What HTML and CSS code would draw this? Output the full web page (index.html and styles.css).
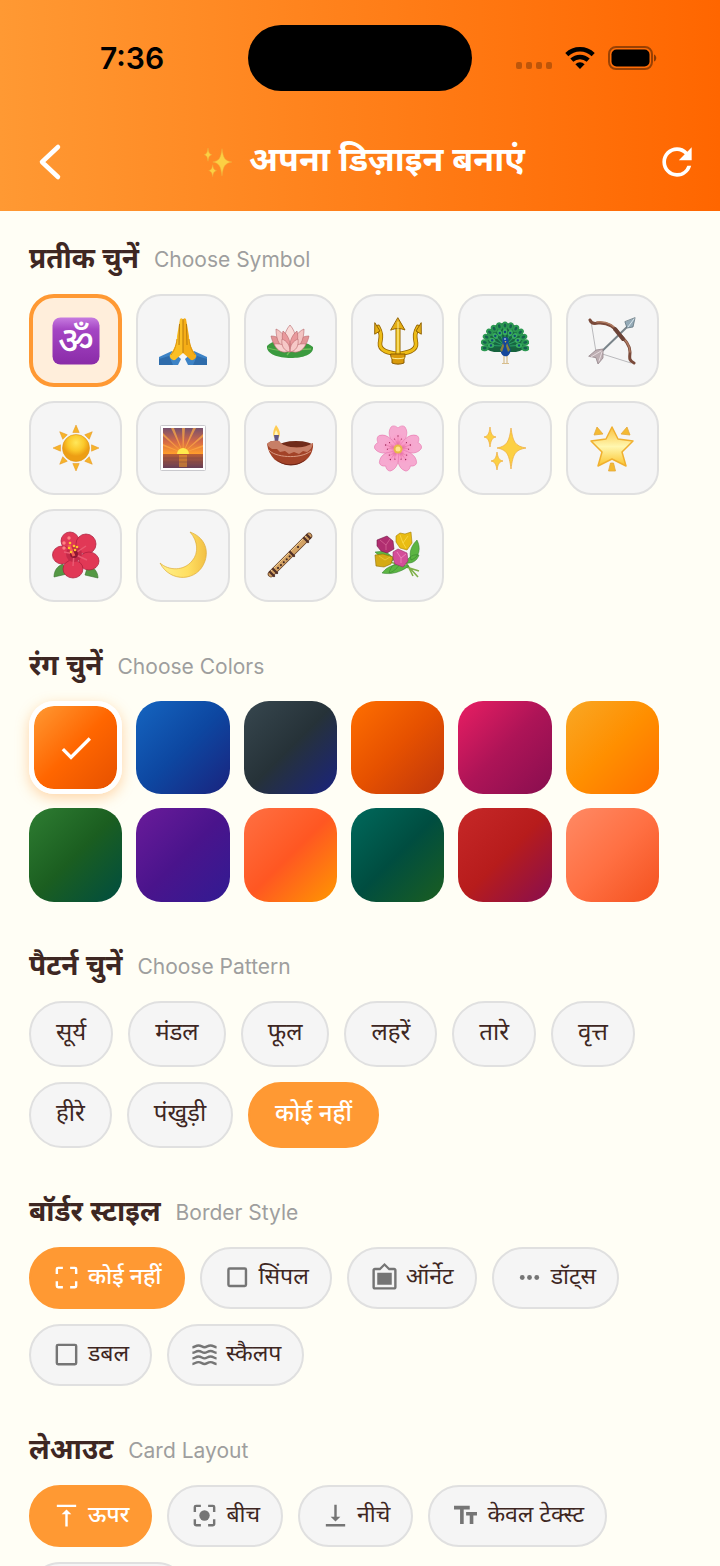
FILE: index.html
```html
<!DOCTYPE html>
<html lang="hi">
<head>
    <meta charset="UTF-8">
    <meta name="viewport" content="width=device-width, initial-scale=1.0">
    <title>अपना डिज़ाइन बनाएं</title>
    <link rel="stylesheet" href="styles.css">
</head>
<body>
    <header class="header">
        <div class="status-bar">
            <span class="time">7:36</span>
            <span class="island"></span>
            <span class="status-icons">
                <svg width="36" height="30" viewBox="0 0 36 30" fill="#000" opacity="0.25">
                    <rect x="0" y="19" width="6" height="7" rx="2"/><rect x="10" y="19" width="6" height="7" rx="2"/><rect x="20" y="19" width="6" height="7" rx="2"/><rect x="30" y="19" width="6" height="7" rx="2"/>
                </svg>
                <svg width="30" height="24" viewBox="0 0 30 24" fill="none" stroke="#000" stroke-width="4.4">
                    <path d="M1.8 8.6a19 19 0 0 1 26.4 0"/><path d="M6.8 14.2a12 12 0 0 1 16.4 0"/><path d="M15 23l-4.6-4.8a6.6 6.6 0 0 1 9.2 0z" fill="#000" stroke="none"/>
                </svg>
                <svg width="49" height="24" viewBox="0 0 49 24">
                    <rect x="1" y="1" width="43" height="22" rx="7" fill="none" stroke="#000" stroke-opacity="0.4" stroke-width="2"/><rect x="3.5" y="3.5" width="38" height="17" rx="5"/><path d="M46 8.5c3 1 3 6 0 7z" opacity="0.45"/>
                </svg>
            </span>
        </div>
        <div class="app-bar">
            <button class="icon-btn" aria-label="वापस">
                <svg width="44" height="44" viewBox="0 0 44 44" fill="none" stroke="#fff" stroke-width="4.5" stroke-linecap="round" stroke-linejoin="round"><path d="M30 7L14 22l16 15"/></svg>
            </button>
            <h1>
                <svg width="32" height="32" viewBox="0 0 48 48"><use href="#sparkles"/></svg>
                <span>अपना डिज़ाइन बनाएं</span>
            </h1>
            <button class="icon-btn" aria-label="रीसेट">
                <svg width="44" height="44" viewBox="0 0 24 24" fill="#fff"><path d="M17.65 6.35A7.96 7.96 0 0 0 12 4c-4.42 0-7.99 3.58-7.99 8s3.57 8 7.99 8c3.73 0 6.84-2.55 7.73-6h-2.08A5.99 5.99 0 0 1 12 18c-3.31 0-6-2.69-6-6s2.69-6 6-6c1.66 0 3.14.69 4.22 1.78L13 11h7V4l-2.35 2.35z"/></svg>
            </button>
        </div>
    </header>

    <main class="content">
        <section>
            <h2>प्रतीक चुनें <small>Choose Symbol</small></h2>
            <div class="tiles">
                <button class="tile active" aria-label="ओम">
                    <svg viewBox="0 0 48 48">
                        <defs><linearGradient id="om" x2="0" y2="1"><stop offset="0" stop-color="#c77be0"/><stop offset=".25" stop-color="#a546c4"/><stop offset="1" stop-color="#8a2ba8"/></linearGradient></defs>
                        <rect x=".5" y=".5" width="47" height="47" rx="8" fill="url(#om)"/>
                        <text class="om-text" x="24" y="37" text-anchor="middle">ॐ</text>
                    </svg>
                </button>
                <button class="tile" aria-label="प्रणाम">
                    <svg viewBox="0 0 48 48">
                        <path d="M0 40l13-6 9 8-3 6H0z" fill="#3d83c6"/><path d="M48 40l-13-6-9 8 3 6h19z" fill="#3d83c6"/>
                        <path d="M0 42l10-3 4 9H0zM48 42l-10-3-4 9h14z" fill="#2e6cab"/>
                        <path d="M21 2c2-2 3 0 3 2v32l-8 7c-3 1-6-3-5-5 5-7 7-13 7-19z" fill="#fbbf24"/>
                        <path d="M27 2c-2-2-3 0-3 2v32l8 7c3 1 6-3 5-5-5-7-7-13-7-19z" fill="#f5ad16"/>
                        <path d="M24 2v34M20.5 7L20 28M27.5 7L28 28" stroke="#b97a0c" fill="none"/>
                        <path d="M18 22c-1 8-3 12-6 16M30 22c1 8 3 12 6 16" stroke="#dc9411" fill="none"/>
                    </svg>
                </button>
                <button class="tile" aria-label="कमल">
                    <svg viewBox="0 0 48 48">
                        <path d="M1 29c5-6 14-6 20-2 7-2 20-3 26 3 1 8-11 11-22 11C12 41 0 37 1 29z" fill="#3b9a3f"/>
                        <path d="M2 31c7 2 14 4 22 2l21-1M21 38l4-5" stroke="#72be5b" stroke-width="1.3" fill="none"/>
                        <g stroke="#b9676b" stroke-width=".6">
                            <path d="M5 19c8 0 14 5 18 14-10 2-16-4-18-14zM43 19c-8 0-14 5-18 14 10 2 16-4 18-14z" fill="#e29596"/>
                            <path d="M10 12c7 3 12 11 14 22-10-2-14-11-14-22zM38 12c-7 3-12 11-14 22 10-2 14-11 14-22z" fill="#f3c4c2"/>
                            <path d="M24 8c7 8 7 17 0 26-7-9-7-18 0-26z" fill="#f9dcd9"/>
                            <path d="M17 14c6 5 8 12 7 20-7-4-9-12-7-20zM31 14c-6 5-8 12-7 20 7-4 9-12 7-20z" fill="#e9999c"/>
                            <path d="M8 27c8-1 13 2 16 7-7 3-13 0-16-7zM40 27c-8-1-13 2-16 7 7 3 13 0 16-7z" fill="#f8cfcd"/>
                            <path d="M16 22c5 2 8 6 8 13-6-1-9-6-8-13zM32 22c-5 2-8 6-8 13 6-1 9-6 8-13z" fill="#f6c8c7"/>
                        </g>
                    </svg>
                </button>
                <button class="tile" aria-label="त्रिशूल">
                    <svg viewBox="0 0 48 48" fill="none" stroke-linecap="round" stroke-linejoin="round">
                        <path d="M4 10c4 7 3 10 2 16-1 8 9 10 18 11 9-1 19-3 18-11-1-6-2-9 2-16" stroke="#946400" stroke-width="4.6"/>
                        <path d="M4 10c4 7 3 10 2 16-1 8 9 10 18 11 9-1 19-3 18-11-1-6-2-9 2-16" stroke="#eebd17" stroke-width="3"/>
                        <path d="M24 8v31" stroke="#946400" stroke-width="5"/><path d="M24 8v31" stroke="#f0c31c" stroke-width="3.4"/>
                        <path d="M24 1l7 12c-5-2-9-2-14 0zM1 6l5 8-5 3zM47 6l-5 8 5 3z" fill="#e6b014" stroke="#946400"/>
                        <path d="M17 37h14v3l-1 2v4c-4 1.500-8 1.500-12 0v-4l-1-2z" fill="#d99a0b" stroke="#8a5b00"/><path d="M18 41c4 1 8 1 12 0M24 5v30" stroke="#fff09a"/>
                    </svg>
                </button>
                <button class="tile" aria-label="मोर">
                    <svg viewBox="0 0 48 48">
                        <defs>
                            <g id="feather"><path d="M24 32V8" stroke="#176d49"/><ellipse cx="24" cy="7.5" rx="3" ry="4" fill="#2c9952"/><ellipse cx="24" cy="7.5" rx="1.3" ry="2" fill="#15604f"/></g>
                            <g id="feather-in"><path d="M24 30V15" stroke="#2b9a63"/><ellipse cx="24" cy="14" rx="2.4" ry="3.2" fill="#38ad5f"/><circle cx="24" cy="14" r="1.2" fill="#12477c"/></g>
                        </defs>
                        <path d="M24 6C12 6 4 15 4 27c0 6 6 8 11 8h18c5 0 11-2 11-8C44 15 36 6 24 6z" fill="#17633e"/>
                        <g transform="translate(0 1)">
                            <use href="#feather" transform="rotate(-96 24 28)"/><use href="#feather" transform="rotate(-80 24 28)"/><use href="#feather" transform="rotate(-64 24 28)"/><use href="#feather" transform="rotate(-48 24 28)"/><use href="#feather" transform="rotate(-32 24 28)"/><use href="#feather" transform="rotate(-16 24 28)"/><use href="#feather"/><use href="#feather" transform="rotate(16 24 28)"/><use href="#feather" transform="rotate(32 24 28)"/><use href="#feather" transform="rotate(48 24 28)"/><use href="#feather" transform="rotate(64 24 28)"/><use href="#feather" transform="rotate(80 24 28)"/><use href="#feather" transform="rotate(96 24 28)"/>
                            <use href="#feather-in" transform="rotate(-88 24 28)"/><use href="#feather-in" transform="rotate(-66 24 28)"/><use href="#feather-in" transform="rotate(-44 24 28)"/><use href="#feather-in" transform="rotate(-22 24 28)"/><use href="#feather-in"/><use href="#feather-in" transform="rotate(22 24 28)"/><use href="#feather-in" transform="rotate(44 24 28)"/><use href="#feather-in" transform="rotate(66 24 28)"/><use href="#feather-in" transform="rotate(88 24 28)"/>
                        </g>
                        <path d="M23 38v8M26 38v8M21 46.500h7" stroke="#d7bd8c" stroke-width="1.2"/>
                        <path d="M24 20c3 0 4 2 3.500 5 0 3 2.500 5 2 9-1 7-9 7-10 0-.5-4 2-6 2-9-.5-3 0-5 2.500-5z" fill="#15479b"/><path d="M22 26l-3 7 2 2 2-6zM26 26l3 7-2 2-2-6z" fill="#89843a"/><circle cx="24" cy="22" r=".8" fill="#fff"/><path d="M23.500 24h2l-1 2z" fill="#c8b04f"/>
                    </svg>
                </button>
                <button class="tile" aria-label="धनुष बाण">
                    <svg viewBox="0 0 48 48" fill="none" stroke-linecap="round">
                        <path d="M3 4l5 31 35 11" stroke="#a9a9ad" stroke-width=".8"/>
                        <path d="M9 39L40 9" stroke="#7a848a" stroke-width="2"/>
                        <path d="M47 1l-2 9-6 1-2-6z" fill="#94aab7" stroke="#61737d" stroke-width=".8"/><path d="M46 2l-6 8" stroke="#dbe7ee"/>
                        <path d="M1 39l7-6 7-1v9l-5 6-2-6z" fill="#bdaeb2" stroke="#94878b" stroke-width=".8"/><path d="M3 40l10-6M11 44l3-9" stroke="#e5dadd"/>
                        <path d="M2 3c1 3 4 4 8 3 10-1 18 5 22 12 5 5 10 10 10 17 0 5-2 8 4 11" stroke="#7a4a3a" stroke-width="3"/>
                        <path d="M9 5c10-1 17 3 22 11 5 6 11 11 11 19" stroke="#af7b61" stroke-width="1.5"/>
                        <path d="M27 12l8 10" stroke="#6b4337" stroke-width="4"/>
                    </svg>
                </button>
                <button class="tile" aria-label="सूर्य">
                    <svg viewBox="0 0 48 48">
                        <defs>
                            <radialGradient id="gold" cy=".3"><stop offset="0" stop-color="#ffe75a"/><stop offset=".6" stop-color="#fbc82a"/><stop offset="1" stop-color="#ed9e14"/></radialGradient>
                            <path id="ray" d="M24 1l3.200 7.500h-6.400z" fill="#f6b32a" stroke="#e6951a" stroke-width=".5"/>
                        </defs>
                        <use href="#ray"/><use href="#ray" transform="rotate(45 24 24)"/><use href="#ray" transform="rotate(90 24 24)"/><use href="#ray" transform="rotate(135 24 24)"/><use href="#ray" transform="rotate(180 24 24)"/><use href="#ray" transform="rotate(225 24 24)"/><use href="#ray" transform="rotate(270 24 24)"/><use href="#ray" transform="rotate(315 24 24)"/>
                        <circle cx="24" cy="24" r="13.5" fill="url(#gold)" stroke="#dd9417" stroke-width=".6"/>
                    </svg>
                </button>
                <button class="tile" aria-label="सूर्योदय">
                    <svg viewBox="0 0 48 48">
                        <defs><linearGradient id="sky" x2="0" y2="1"><stop offset="0" stop-color="#76506d"/><stop offset=".35" stop-color="#d66a45"/><stop offset=".64" stop-color="#ff9d2c"/><stop offset=".66" stop-color="#b75d35"/><stop offset="1" stop-color="#663e56"/></linearGradient></defs>
                        <rect x="1.5" y="1.5" width="45" height="45" rx="1" fill="#fff" stroke="#c9c9cd"/>
                        <rect x="4" y="4" width="40" height="40" fill="url(#sky)"/>
                        <path d="M24 29L4 9v3zM24 29L12 4h3zM24 29L23 4h3zM24 29L34 4h3zM24 29L44 10v3zM24 29L4 20v2zM24 29l20-8v2z" fill="#ffad45" opacity=".7"/>
                        <path d="M18 30a6 6 0 0 1 12 0z" fill="#ffe94c"/><path d="M20 31h8v12h-8z" fill="#f39a28" opacity=".55"/><path d="M4 34h40M4 38h40" stroke="#7d4744" opacity=".5"/>
                    </svg>
                </button>
                <button class="tile" aria-label="दीया">
                    <svg viewBox="0 0 48 48">
                        <path d="M10 1c5 6 5 12 1 14-5-1-5-7-1-14z" fill="#ffcc52"/><path d="M10 6c3 4 2 7 0 8-2-1-2-4 0-8z" fill="#fff5bd"/><path d="M8 11h5l-1 7H9z" fill="#605788"/>
                        <ellipse cx="30" cy="22" rx="17" ry="5" fill="#702b1a"/>
                        <path d="M1 20c2-3 7-4 12-3 3 6 22 10 34 2 1 12-8 22-22 22C11 41 3 33 1 20z" fill="#a34328"/>
                        <path d="M1 20c2-3 7-4 12-3 3 6 22 10 34 2-1 5-3 7-6 9l-4-1-4 3-5-2-5 2-4-3-5 1-3-3-5 0c-2-1-4-3-5-5z" fill="#c77f67"/>
                        <path d="M3 26c5 7 30 10 42 1" stroke="#d99981" fill="none"/><path d="M10 35c7 7 22 7 30 0-6 8-23 9-30 0z" fill="#6c2417"/>
                    </svg>
                </button>
                <button class="tile" aria-label="पुष्प">
                    <svg viewBox="0 0 48 48">
                        <defs>
                            <radialGradient id="pink" cy=".8"><stop offset="0" stop-color="#ee6da9"/><stop offset=".4" stop-color="#fb9bc8"/><stop offset="1" stop-color="#f6a9d0"/></radialGradient>
                            <g id="petal"><path d="M24 25c-6-6-12-15-7-22 2-2 5-1 7 1 2-2 5-3 7-1 5 7-1 16-7 22z" fill="url(#pink)" stroke="#e777ae" stroke-width=".6"/><path d="M24 21v-8M24 21l-3-6M24 21l3-6" stroke="#e07aa6" stroke-width=".5"/><circle cx="24" cy="12" r=".7" fill="#9c2758"/><circle cx="20.5" cy="15" r=".6" fill="#9c2758"/><circle cx="27.5" cy="15" r=".6" fill="#9c2758"/></g>
                        </defs>
                        <use href="#petal"/><use href="#petal" transform="rotate(72 24 25)"/><use href="#petal" transform="rotate(144 24 25)"/><use href="#petal" transform="rotate(216 24 25)"/><use href="#petal" transform="rotate(288 24 25)"/>
                        <circle cx="24" cy="25" r="4.5" fill="#e8b848"/><circle cx="24" cy="25" r="2.5" fill="#ffe58b"/>
                    </svg>
                </button>
                <button class="tile" aria-label="चमक">
                    <svg viewBox="0 0 48 48">
                        <defs><g id="sparkles" fill="#fcd043" stroke="#eeaa3c" stroke-width=".7"><path d="M30 4c2 14 4 18 15 20-11 2-13 6-15 21-2-15-4-19-14-21 10-2 12-6 14-20z"/><path d="M9 3c1 7 2 9 6 10-4 1-5 3-6 10-1-7-2-9-6-10 4-1 5-3 6-10z"/><path d="M16 28c1 6 2 8 6 9-4 1-5 3-6 9-1-6-2-8-6-9 4-1 5-3 6-9z"/></g></defs>
                        <use href="#sparkles"/>
                    </svg>
                </button>
                <button class="tile" aria-label="तारा">
                    <svg viewBox="0 0 48 48">
                        <defs><linearGradient id="star" x2="0" y2="1"><stop offset="0" stop-color="#fbc13c"/><stop offset=".5" stop-color="#fff7b0"/><stop offset="1" stop-color="#fbc42c"/></linearGradient></defs>
                        <path d="M24 3l6 12 15 2-11 11 4 14-14-7-14 7 4-14L3 17l15-2z" fill="url(#star)" stroke="#f0b030" stroke-width="1.5" stroke-linejoin="round"/>
                        <path d="M9 3l6 7-9 1zM39 3l-6 7 9 1zM22.500 39h3l2 8h-7z" fill="#f4ba32" stroke="#e4a83a" stroke-width=".8" stroke-linejoin="round"/>
                    </svg>
                </button>
                <button class="tile" aria-label="गुड़हल">
                    <svg viewBox="0 0 48 48">
                        <path d="M2 46c0-6 3-11 9-13l4 10zM46 47c0-6-4-11-10-13l-3 10z" fill="#549844" stroke="#39722f" stroke-width=".6"/>
                        <g fill="#e13856" stroke="#a91d3b" stroke-width=".7"><ellipse cx="18" cy="10" rx="9" ry="9"/><ellipse cx="34" cy="13" rx="10" ry="10"/><ellipse cx="37" cy="30" rx="10" ry="9"/><ellipse cx="10" cy="24" rx="9.5" ry="9"/><ellipse cx="21" cy="38" rx="10" ry="9"/></g>
                        <circle cx="22" cy="23" r="8" fill="#c42a49"/>
                        <path d="M22 23L12 21M22 23l12-8M22 23l13 6M22 23l-1 12" stroke="#ea5a72" stroke-width="1.5"/><circle cx="22" cy="23" r="4" fill="#8f1632"/>
                        <path d="M22 25l-5-11" stroke="#f45c55" stroke-width="3"/>
                        <g fill="#ffc52c"><circle cx="18" cy="12" r="1.3"/><circle cx="22" cy="15" r="1.3"/><circle cx="17" cy="17" r="1.3"/><circle cx="23" cy="19" r="1.3"/><circle cx="19" cy="21" r="1.3"/><circle cx="25" cy="16" r="1.3"/></g>
                        <g fill="#ff8184"><circle cx="12" cy="12" r="1.7"/><circle cx="17" cy="7" r="1.7"/><circle cx="12" cy="17" r="1.7"/></g>
                    </svg>
                </button>
                <button class="tile" aria-label="चंद्रमा">
                    <svg viewBox="0 0 48 48">
                        <defs><linearGradient id="moon"><stop offset="0" stop-color="#fff08a"/><stop offset=".6" stop-color="#ffdf62"/><stop offset="1" stop-color="#f2c044"/></linearGradient></defs>
                        <path d="M31 1c14 5 19 17 15 29C39 51 11 52 1 32c9 8 24 8 32-2 7-8 6-20-2-29z" fill="url(#moon)" stroke="#deaa37" stroke-width=".7"/>
                    </svg>
                </button>
                <button class="tile" aria-label="बांसुरी">
                    <svg viewBox="0 0 48 48" fill="none" stroke-linecap="round">
                        <path d="M5 43L43 5" stroke="#654027" stroke-width="6.5"/><path d="M5 43L43 5" stroke="#d3a264" stroke-width="5"/><path d="M4 41L41 4" stroke="#f0ce90"/>
                        <path d="M4 41l4 4M7 38l4 4M24 21l4 4M38 7l4 4M41 4l3 3" stroke="#513027" stroke-width="2.4"/>
                        <path d="M12 37l13-13M32 16l.1-.1" stroke="#422923" stroke-width="2" stroke-dasharray="0.1 4"/>
                    </svg>
                </button>
                <button class="tile" aria-label="गुलदस्ता">
                    <svg viewBox="0 0 48 48">
                        <path d="M22 22l22 24M29 25l10 20M13 30l32 10" stroke="#7fb04a" stroke-width="1.6"/>
                        <path d="M37 29C34 20 39 13 43 9c4 8 3 17-6 20zM8 42c7-9 17-10 27-7-8 6-17 9-27 7zM31 32c4-7 9-9 14-8-2 6-7 9-14 8zM1 21l10-1 10 8-7 5zM27 31c-3 6-8 10-12 11 2-7 6-11 12-11z" fill="#5cb543" stroke="#2f7c2b" stroke-width=".5"/>
                        <g stroke-width=".6">
                            <path d="M22 5l4-3 5 1 6-2 1 11-5 7-7-2-4-6z" fill="#e9bc12" stroke="#a17d09"/><path d="M26 4l3 8 5-7M29 12l3 5" stroke="#ffe462" fill="none"/>
                            <path d="M3 9l5-2 5-2 6 5 1 8-7 4-6-2-4-5z" fill="#b02e70" stroke="#711b47"/><path d="M6 9l6 5 4-6M12 14v5" stroke="#e077a2" fill="none"/>
                            <path d="M1 24l8-1 10 3-2 7-7 3-8-1z" fill="#d5aa15" stroke="#917109"/><path d="M5 25l6 4 5-3" stroke="#f4d849" fill="none"/>
                            <path d="M19 21l5-3 9 4 1 8-5 6-8-3-2-6z" fill="#d44e99" stroke="#953069"/><path d="M23 21l4 6 5-4M27 27v5" stroke="#f8a2ce" fill="none"/>
                        </g>
                    </svg>
                </button>
            </div>
        </section>

        <section>
            <h2>रंग चुनें <small>Choose Colors</small></h2>
            <div class="tiles">
                <button class="swatch saffron active" aria-label="केसरिया">
                    <svg width="40" height="40" viewBox="0 0 24 24" fill="#fff"><path d="M9 16.170L4.830 12l-1.420 1.410L9 19 21 7l-1.410-1.410z"/></svg>
                </button>
                <button class="swatch blue" aria-label="नीला"></button>
                <button class="swatch night" aria-label="रात"></button>
                <button class="swatch deep-orange" aria-label="नारंगी"></button>
                <button class="swatch pink" aria-label="गुलाबी"></button>
                <button class="swatch amber" aria-label="पीला"></button>
                <button class="swatch green" aria-label="हरा"></button>
                <button class="swatch purple" aria-label="बैंगनी"></button>
                <button class="swatch sunset" aria-label="संध्या"></button>
                <button class="swatch teal" aria-label="मोरपंखी"></button>
                <button class="swatch red" aria-label="लाल"></button>
                <button class="swatch coral" aria-label="मूंगा"></button>
            </div>
        </section>

        <section>
            <h2>पैटर्न चुनें <small>Choose Pattern</small></h2>
            <div class="chips patterns">
                <button class="chip"><span>सूर्य</span></button>
                <button class="chip"><span>मंडल</span></button>
                <button class="chip"><span>फूल</span></button>
                <button class="chip"><span>लहरें</span></button>
                <button class="chip"><span>तारे</span></button>
                <button class="chip"><span>वृत्त</span></button>
                <button class="chip"><span>हीरे</span></button>
                <button class="chip"><span>पंखुड़ी</span></button>
                <button class="chip active"><span>कोई नहीं</span></button>
            </div>
        </section>

        <section>
            <h2>बॉर्डर स्टाइल <small>Border Style</small></h2>
            <div class="chips">
                <button class="chip active">
                    <svg viewBox="0 0 24 24"><path d="M4 9V5c0-.6.4-1 1-1h4M15 4h4c.6 0 1 .4 1 1v4M20 15v4c0 .6-.4 1-1 1h-4M9 20H5c-.6 0-1-.4-1-1v-4" fill="none" stroke="currentColor" stroke-width="2"/></svg>
                    <span>कोई नहीं</span>
                </button>
                <button class="chip">
                    <svg viewBox="0 0 24 24"><rect x="4.5" y="4.5" width="14.5" height="14.5" rx="1" fill="none" stroke="currentColor" stroke-width="2"/></svg>
                    <span>सिंपल</span>
                </button>
                <button class="chip">
                    <svg viewBox="0 0 24 24"><path d="M20 4h-4l-4-4-4 4H4c-1.1 0-2 .9-2 2v14c0 1.1.9 2 2 2h16c1.1 0 2-.9 2-2V6c0-1.1-.9-2-2-2zm0 16H4V6h4.520L12 2.500 15.520 6H20v14zM18 8H6v10h12z"/></svg>
                    <span>ऑर्नेट</span>
                </button>
                <button class="chip">
                    <svg viewBox="0 0 24 24"><circle cx="6" cy="12" r="2"/><circle cx="12" cy="12" r="2"/><circle cx="18" cy="12" r="2"/></svg>
                    <span>डॉट्स</span>
                </button>
                <button class="chip">
                    <svg viewBox="0 0 24 24"><rect x="4" y="4" width="16" height="16" rx="1" fill="none" stroke="currentColor" stroke-width="2"/></svg>
                    <span>डबल</span>
                </button>
                <button class="chip">
                    <svg viewBox="0 0 24 24" fill="none" stroke="currentColor" stroke-width="2">
                        <defs><path id="wave" d="M2 6c2.200 0 2.500-1.500 5-1.500S10 6 12 6s2.500-1.500 5-1.500S20 6 22 6"/></defs>
                        <use href="#wave"/><use href="#wave" y="4.6"/><use href="#wave" y="9.2"/><use href="#wave" y="13.800"/>
                    </svg>
                    <span>स्कैलप</span>
                </button>
            </div>
        </section>

        <section>
            <h2>लेआउट <small>Card Layout</small></h2>
            <div class="chips">
                <button class="chip active">
                    <svg viewBox="0 0 24 24"><path d="M8 11h3v10h2V11h3l-4-4-4 4zM4 3v2h16V3z"/></svg>
                    <span>ऊपर</span>
                </button>
                <button class="chip">
                    <svg viewBox="0 0 24 24"><circle cx="12" cy="12" r="4.3"/><path d="M4 9V5c0-.6.4-1 1-1h4M15 4h4c.6 0 1 .4 1 1v4M20 15v4c0 .6-.4 1-1 1h-4M9 20H5c-.6 0-1-.4-1-1v-4" fill="none" stroke="currentColor" stroke-width="2"/></svg>
                    <span>बीच</span>
                </button>
                <button class="chip">
                    <svg viewBox="0 0 24 24"><path d="M16 13h-3V3h-2v10H8l4 4 4-4zM4 19v2h16v-2z"/></svg>
                    <span>नीचे</span>
                </button>
                <button class="chip">
                    <svg viewBox="0 0 24 24"><path d="M2.500 5.500h13M9 5.500V19M12.500 10.500h9M17 10.500V19" fill="none" stroke="currentColor" stroke-width="3"/></svg>
                    <span>केवल टेक्स्ट</span>
                </button>
                <button class="chip">
                    <svg viewBox="0 0 24 24"><path d="M4 5h16v2H4zM4 11h16v2H4zM4 17h16v2H4z"/></svg>
                    <span>विभाजित</span>
                </button>
            </div>
        </section>
    </main>
</body>
</html>
```

FILE: styles.css
```css
* {
    box-sizing: border-box;
}

body {
    display: flex;
    flex-direction: column;
    height: 100vh;
    margin: 0;
    background: #fffef5;
    color: #3e2723;
    font-family: "Noto Sans", "Noto Sans Devanagari", "Liberation Sans", sans-serif;
}

button {
    font-family: inherit;
    color: inherit;
    padding: 0;
    border: none;
    background: none;
    cursor: pointer;
}

.header {
    flex: none;
    background: linear-gradient(90deg, #ff9933, #ff6600);
    color: #fff;
}

.status-bar {
    display: grid;
    grid-template-columns: 1fr 224px 1fr;
    align-items: center;
    padding: 25px 0 21px;
    color: #000;
}

.time {
    padding-left: 100px;
    font-family: Inter, sans-serif;
    font-size: 30px;
    font-weight: 600;
}

.island {
    height: 66px;
    border-radius: 33px;
    background: #000;
}

.status-icons {
    display: flex;
    align-items: center;
    justify-content: flex-end;
    gap: 13px;
    padding-right: 63px;
}

.app-bar {
    display: flex;
    align-items: center;
    justify-content: space-between;
    height: 99px;
    padding: 0 21px 0 28px;
}

.icon-btn {
    display: flex;
}

h1 {
    display: flex;
    align-items: center;
    gap: 15px;
    margin: 0;
    font-size: 34px;
    font-weight: 700;
    line-height: 40px;
}

h1 span {
    padding-bottom: 8px;
}

/* only this part scrolls, the header stays */
.content {
    display: flex;
    flex: 1;
    flex-direction: column;
    gap: 45px;
    padding: 29px;
    overflow-y: auto;
    scrollbar-width: none;
}

h2 {
    display: flex;
    align-items: flex-start;
    gap: 15px;
    margin: 0 0 15px;
    font-size: 28px;
    font-weight: 700;
    line-height: 35px;
}

h2 small {
    font-family: Inter, sans-serif;
    font-size: 21px;
    font-weight: 400;
    line-height: 39px;
    color: #9e9e9e;
}

.tiles {
    display: grid;
    grid-template-columns: repeat(6, 1fr);
    gap: 14px;
    margin-right: 32px;
}

.tile,
.swatch {
    display: flex;
    align-items: center;
    justify-content: center;
    aspect-ratio: 1;
    border-radius: 25px;
}

.tile {
    border: 2px solid #e0e0e0;
    background: #f5f5f5;
}

.tile.active {
    border: 4px solid #ff9933;
    background: #ffeedb;
}

.tile svg {
    width: 48px;
    height: 48px;
}

.om-text {
    font-size: 38px;
    font-weight: 500;
    fill: #fff;
}

.swatch.active {
    border: 5px solid #fff;
    box-shadow: 0 4px 14px rgba(255, 153, 51, 0.4);
}

.saffron { background: linear-gradient(135deg, #ff9933, #ff6600, #e65100) padding-box; }
.blue { background: linear-gradient(135deg, #1565c0, #0d47a1, #1a237e); }
.night { background: linear-gradient(135deg, #37474f, #263238, #1a237e); }
.deep-orange { background: linear-gradient(135deg, #ff6f00, #e65100, #bf360c); }
.pink { background: linear-gradient(135deg, #e91e63, #ad1457, #880e4f); }
.amber { background: linear-gradient(135deg, #f9a825, #ff8f00, #ff6f00); }
.green { background: linear-gradient(135deg, #2e7d32, #1b5e20, #004d40); }
.purple { background: linear-gradient(135deg, #6a1b9a, #4a148c, #311b92); }
.sunset { background: linear-gradient(135deg, #ff7043, #ff5722, #ff9800); }
.teal { background: linear-gradient(135deg, #00695c, #004d40, #1b5e20); }
.red { background: linear-gradient(135deg, #c62828, #b71c1c, #880e4f); }
.coral { background: linear-gradient(135deg, #ff8a65, #ff7043, #f4511e); }

.chips {
    display: flex;
    flex-wrap: wrap;
    gap: 15px;
}

.chip {
    display: flex;
    align-items: center;
    gap: 7px;
    height: 62px;
    padding: 0 21px;
    border: 2px solid #e0e0e0;
    border-radius: 33px;
    background: #f5f5f5;
    font-size: 23px;
}

.chip span {
    padding-bottom: 6px;
}

.patterns .chip {
    height: 66px;
    padding: 0 25px;
    font-size: 24px;
}

.chip.active {
    border-color: #ff9933;
    background: #ff9933;
    color: #fff;
    font-weight: 500;
}

.chip svg {
    width: 29px;
    height: 29px;
    fill: currentColor;
    color: #757575;
}

.chip svg[fill="none"] {
    fill: none;
}

.chip.active svg {
    color: #fff;
}
```
